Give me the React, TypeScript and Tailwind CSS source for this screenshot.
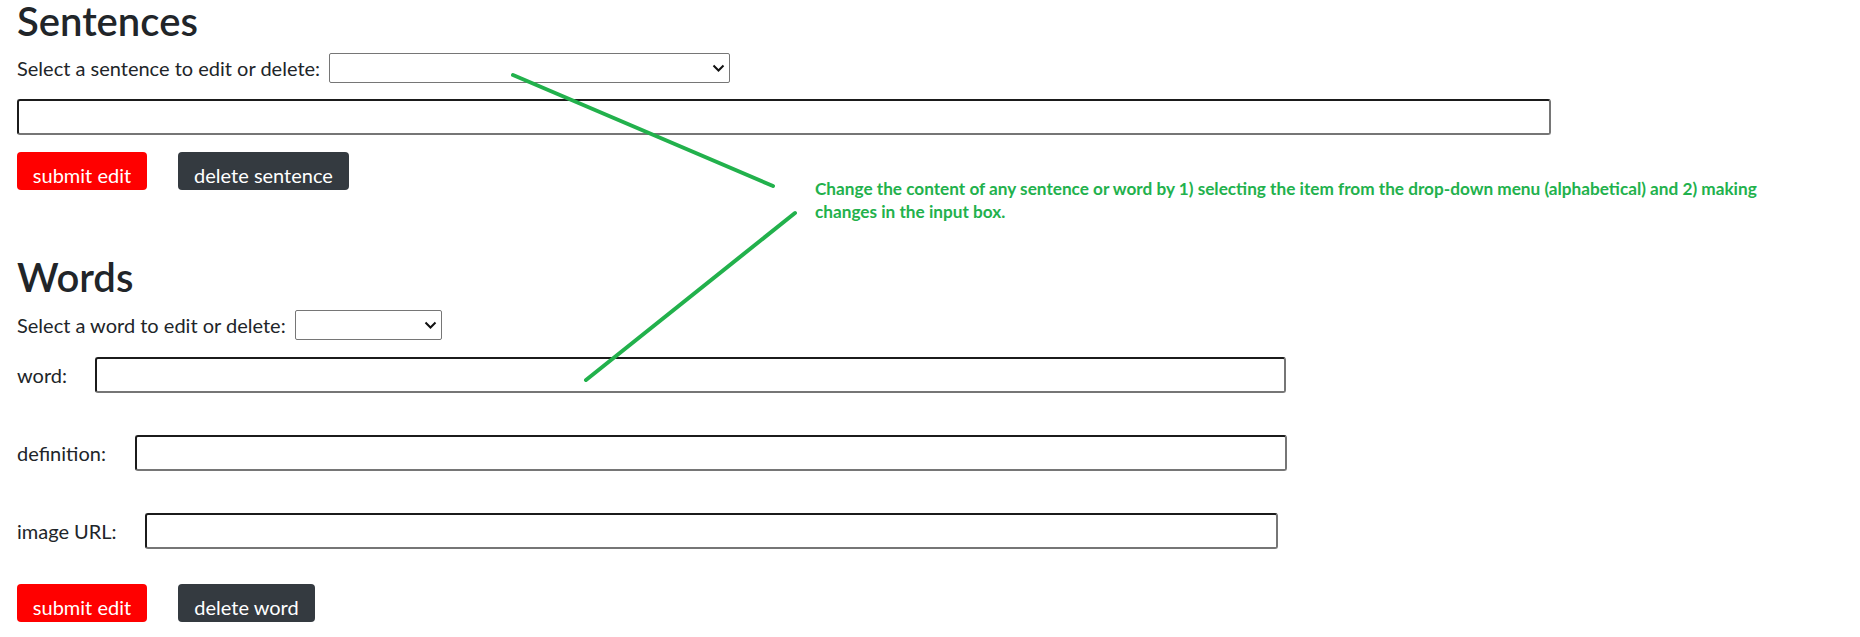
import React from 'react';

const inputBox =
  'block h-[36px] border-2 border-t-[#1b1b1b] border-l-[#1b1b1b] border-r-[#767676] border-b-[#767676] rounded-[3px] bg-white';

function Chevron() {
  return (
    <svg width="13" height="8" viewBox="0 0 13 8" className="pointer-events-none absolute right-[5px] top-1/2 -translate-y-1/2">
      <path d="M1.5 1.5 L6.5 6.5 L11.5 1.5" fill="none" stroke="#111" strokeWidth="2" />
    </svg>
  );
}

function Dropdown({ width }: { width: string }) {
  return (
    <div className={`relative h-[30px] ${width}`}>
      <select className="h-full w-full appearance-none border border-[#767676] rounded-[2px] bg-white" />
      <Chevron />
    </div>
  );
}

function Btn({ label, dark, width }: { label: string; dark?: boolean; width: string }) {
  return (
    <button
      className={`h-[38px] ${width} rounded-[4px] pt-[8px] leading-[30px] text-[20px] text-white text-center ${
        dark ? 'bg-[#343a40]' : 'bg-[#ff0000]'
      }`}
    >
      {label}
    </button>
  );
}

function Field({ label, width, gap }: { label: string; width: string; gap: string }) {
  return (
    <div className={`flex items-center ${gap}`}>
      <span className="text-[20px] leading-[30px]">{label}</span>
      <input className={`${inputBox} ${width}`} />
    </div>
  );
}

export default function App() {
  return (
    <div className="relative h-[637px] w-[1860px] overflow-hidden bg-white text-[#212529]" style={{ fontFamily: 'Lato, "Noto Sans", sans-serif' }}>
      <div className="pl-[17px] pt-[2px]">
        {/* sentences */}
        <h2 className="-mt-[2px] text-[40px] leading-[42px] font-semibold">Sentences</h2>
        <div className="mt-[11px] flex items-center gap-[9px]">
          <span className="text-[20px] leading-[30px]">Select a sentence to edit or delete:</span>
          <Dropdown width="w-[401px]" />
        </div>
        <input className={`${inputBox} mt-[16px] w-[1534px]`} />
        <div className="mt-[17px] flex gap-[31px]">
          <Btn label="submit edit" width="w-[130px]" />
          <Btn label="delete sentence" dark width="w-[171px]" />
        </div>

        {/* words */}
        <h2 className="mt-[66px] text-[40px] leading-[42px] font-semibold">Words</h2>
        <div className="mt-[12px] flex items-center gap-[9px]">
          <span className="text-[20px] leading-[30px]">Select a word to edit or delete:</span>
          <Dropdown width="w-[147px]" />
        </div>
        <div className="mt-[17px]">
          <Field label="word:" width="w-[1191px]" gap="gap-[28px]" />
        </div>
        <div className="mt-[42px]">
          <Field label="definition:" width="w-[1152px]" gap="gap-[29px]" />
        </div>
        <div className="mt-[42px]">
          <Field label="image URL:" width="w-[1133px]" gap="gap-[28px]" />
        </div>
        <div className="mt-[35px] flex gap-[31px]">
          <Btn label="submit edit" width="w-[130px]" />
          <Btn label="delete word" dark width="w-[137px]" />
        </div>
      </div>

      {/* annotation overlay */}
      <svg className="pointer-events-none absolute left-0 top-0" width="1860" height="637">
        <line x1="513" y1="75" x2="773" y2="186" stroke="#22b14c" strokeWidth="4" strokeLinecap="round" />
        <line x1="795" y1="213" x2="586" y2="380" stroke="#22b14c" strokeWidth="4" strokeLinecap="round" />
      </svg>
      <p className="absolute left-[815px] top-[177px] w-[960px] text-[17.2px] leading-[23px] font-bold text-[#22b14c]">
        Change the content of any sentence or word by 1) selecting the item from the drop-down menu (alphabetical) and 2) making changes in the input box.
      </p>
    </div>
  );
}
